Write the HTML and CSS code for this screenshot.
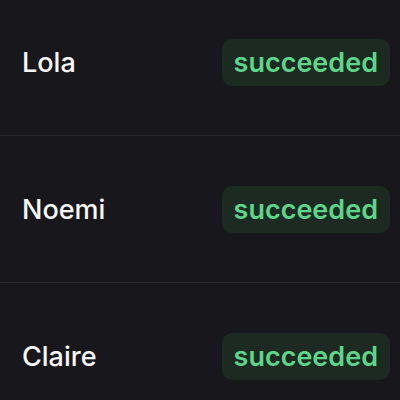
FILE: index.html
```html
<!DOCTYPE html>
<html>
<head>
<meta charset="utf-8">
<link rel="stylesheet" href="styles.css">
</head>
<body>
<ul class="list">
  <li class="row"><span class="name">Lola</span><span class="badge">succeeded</span></li>
  <li class="row"><span class="name">Noemi</span><span class="badge">succeeded</span></li>
  <li class="row"><span class="name">Claire</span><span class="badge">succeeded</span></li>
</ul>
</body>
</html>
```
FILE: styles.css
```css
html, body {
  margin: 0;
  padding: 0;
  background: #18171c;
  height: 100%;
  overflow: hidden;
}
.list {
  list-style: none;
  margin: -11px 0 0 0;
  padding: 0;
  font-family: Inter, "Noto Sans", sans-serif;
}
.row {
  display: flex;
  align-items: center;
  justify-content: space-between;
  height: 146px;
  padding: 0 10px 0 22px;
  border-bottom: 1px solid #28272d;
}
.name {
  color: #f7f7f8;
  font-size: 27px;
  font-weight: 500;
}
.badge {
  background: #1c2a22;
  color: #5dd68a;
  font-size: 27px;
  font-weight: 600;
  padding: 8px 12px;
  border-radius: 10px;
  line-height: 31px;
}
```
